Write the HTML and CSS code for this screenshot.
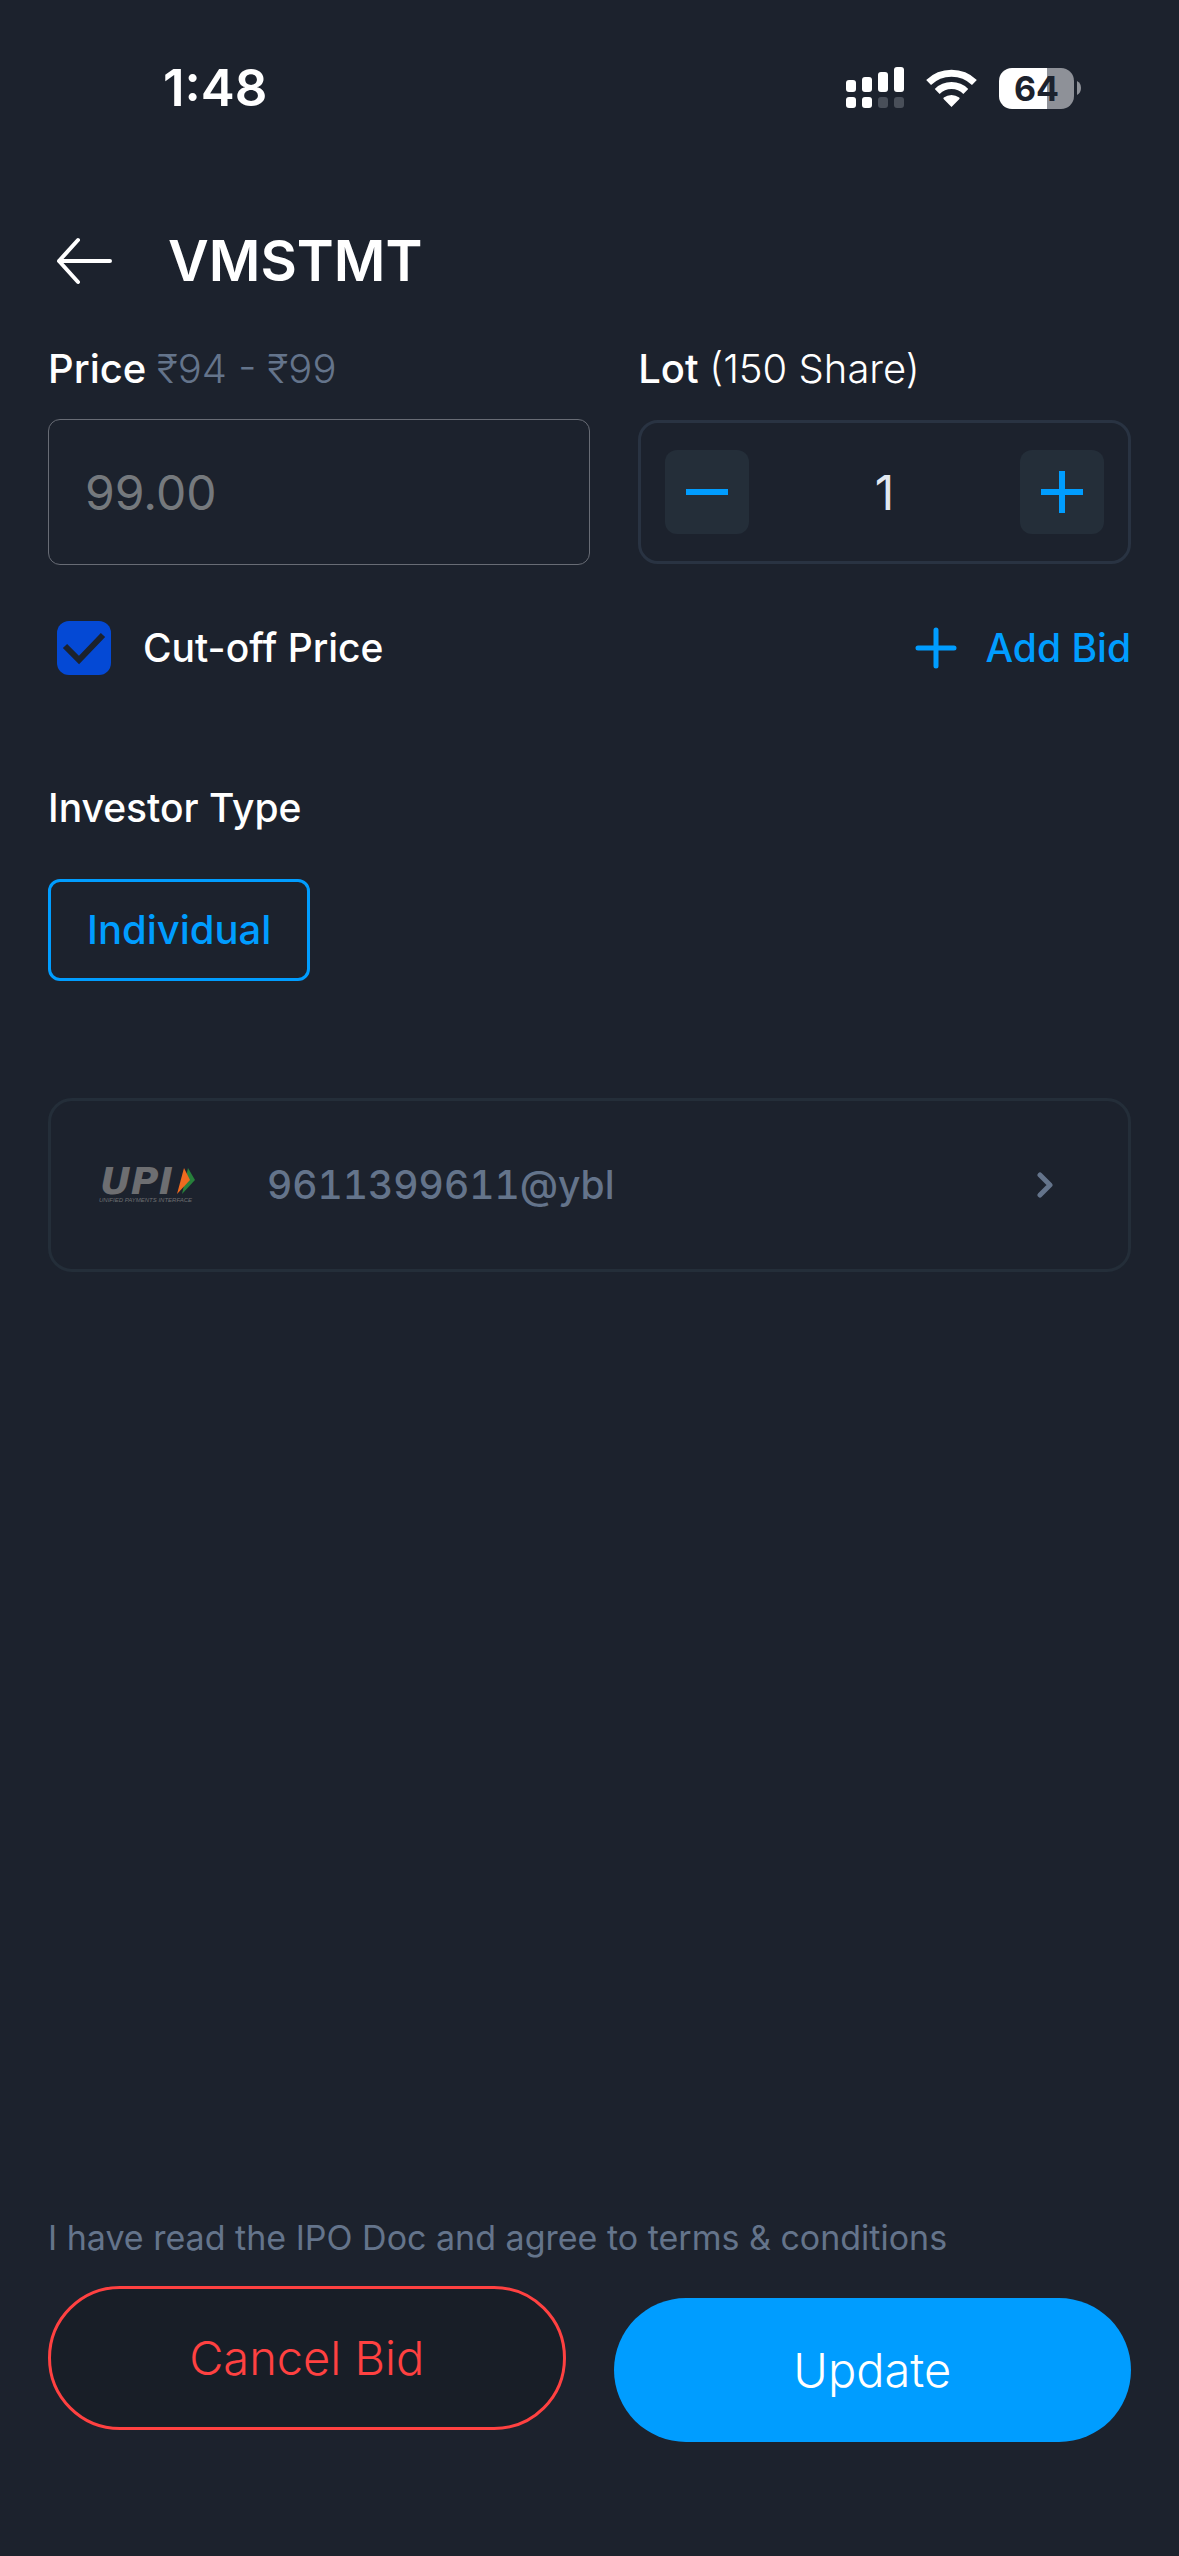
FILE: index.html
```html
<!DOCTYPE html>
<html lang="en">
<head>
<meta charset="utf-8">
<meta name="viewport" content="width=device-width, initial-scale=1">
<title>VMSTMT</title>
<link rel="stylesheet" href="styles.css">
</head>
<body>
<div class="status">
  <time class="status-time">1:48</time>
  <div class="status-icons">
    <svg class="signal" viewBox="0 0 58 42" aria-hidden="true">
      <g fill="#fff">
        <rect x="0" y="13" width="10" height="12" rx="3"/>
        <rect x="16" y="10" width="10" height="15" rx="3"/>
        <rect x="32" y="5" width="10" height="20" rx="3"/>
        <rect x="48" y="0" width="10" height="25" rx="3"/>
        <rect x="0" y="30" width="10" height="11" rx="3"/>
        <rect x="16" y="30" width="10" height="11" rx="3"/>
      </g>
      <g fill="#494f59">
        <rect x="32" y="30" width="10" height="11" rx="3"/>
        <rect x="48" y="30" width="10" height="11" rx="3"/>
      </g>
    </svg>
    <svg class="wifi" viewBox="0 0 51 38" aria-hidden="true">
      <g fill="none" stroke="#fff" stroke-width="7">
        <path d="M2.6 13.4a33 33 0 0 1 45.8 0"/>
        <path d="M11.2 22.4a20.5 20.5 0 0 1 28.6 0"/>
      </g>
      <path fill="#fff" d="M25.5 38 17.6 30q-.6-.8.2-1.4a12.5 12.5 0 0 1 15.4 0q.8.6.2 1.4z"/>
    </svg>
    <div class="battery">
      <span class="battery-body">64</span>
      <svg class="battery-tip" viewBox="0 0 5 14" aria-hidden="true"><path fill="#8e9198" d="M0 0q4 2 4 7t-4 7z"/></svg>
    </div>
  </div>
</div>

<header class="header">
  <button class="back" type="button" aria-label="Back">
    <svg viewBox="0 0 58 48" aria-hidden="true"><path d="M55 24H4M23 3 4 24l19 21"/></svg>
  </button>
  <h1 class="title">VMSTMT</h1>
</header>

<main class="content">
  <div class="bid">
    <label class="label" for="price">Price <span class="range">₹94 - ₹99</span></label>
    <label class="label" for="lot">Lot <span class="shares">(150 Share)</span></label>
    <input class="price" id="price" type="text" placeholder="99.00">
    <div class="stepper">
      <button class="step" type="button" aria-label="Decrease">
        <svg viewBox="0 0 42 42" aria-hidden="true"><path d="M0 21h42"/></svg>
      </button>
      <input class="lot" id="lot" type="text" value="1">
      <button class="step" type="button" aria-label="Increase">
        <svg viewBox="0 0 42 42" aria-hidden="true"><path d="M0 21h42M21 0v42"/></svg>
      </button>
    </div>
  </div>

  <div class="options">
    <label class="cutoff">
      <span class="tick">
        <input class="tick-box" type="checkbox" checked>
        <svg class="tick-mark" viewBox="0 0 54 54" aria-hidden="true"><path d="M8 25l14 14L46 14"/></svg>
      </span>
      Cut-off Price
    </label>
    <button class="add" type="button">
      <svg viewBox="0 0 42 42" aria-hidden="true"><path d="M3 21h36M21 3v36"/></svg>
      Add Bid
    </button>
  </div>

  <h2 class="subtitle">Investor Type</h2>
  <button class="chip" type="button">Individual</button>

  <button class="upi" type="button">
    <svg class="upi-logo" viewBox="0 0 96 36" aria-hidden="true">
      <path fill="#27803b" d="M89 1l7 12-13 14z"/>
      <path fill="#ee6a1f" d="M85 1l6 12-13 14z"/>
      <text class="upi-name" x="1" y="27">UPI</text>
      <text class="upi-tag" x="0" y="35">UNIFIED PAYMENTS INTERFACE</text>
    </svg>
    <span class="upi-id">9611399611@ybl</span>
    <svg class="chevron" viewBox="0 0 16 28" aria-hidden="true"><path d="M3 4l10 10L3 24"/></svg>
  </button>
</main>

<footer class="footer">
  <p class="terms">I have read the IPO Doc and agree to terms &amp; conditions</p>
  <div class="actions">
    <button class="action cancel" type="button">Cancel Bid</button>
    <button class="action update" type="button">Update</button>
  </div>
</footer>
</body>
</html>
```
FILE: styles.css
```css
* {
  box-sizing: border-box;
}

body {
  margin: 0;
  min-height: 100vh;
  display: flex;
  flex-direction: column;
  background: #1c222d;
  color: #fff;
  font-family: Inter, "Liberation Sans", sans-serif;
  font-size: 40px;
  line-height: 48px;
}

button,
input {
  margin: 0;
  padding: 0;
  border: 0;
  background: none;
  color: inherit;
  font: inherit;
}

svg {
  display: block;
}

/* Status bar */
.status {
  display: flex;
  align-items: center;
  justify-content: space-between;
  padding: 58px 97px 0 163px;
}

.status-time {
  font-size: 51px;
  font-weight: 600;
  line-height: 60px;
}

.status-icons {
  display: flex;
  align-items: center;
  gap: 22px;
}

.signal {
  width: 58px;
  height: 42px;
}

.wifi {
  width: 51px;
  height: 38px;
}

.battery {
  display: flex;
  align-items: center;
  gap: 3px;
}

.battery-body {
  width: 75px;
  border-radius: 13px;
  background: linear-gradient(90deg, #fff 64%, #8e9198 64%);
  color: #1c222d;
  font-size: 34px;
  font-weight: 700;
  line-height: 41px;
  text-align: center;
}

.battery-tip {
  width: 5px;
  height: 14px;
}

/* Header */
.header {
  display: flex;
  align-items: center;
  gap: 54px;
  padding: 107px 54px 48px;
}

.back svg {
  width: 60px;
  height: 48px;
  fill: none;
  stroke: #fff;
  stroke-width: 4px;
  stroke-linecap: round;
  stroke-linejoin: round;
}

.title {
  margin: 0;
  font-size: 56px;
  font-weight: 600;
  line-height: 72px;
}

/* Bid form */
.content {
  padding: 0 48px;
}

.bid {
  display: grid;
  grid-template-columns: minmax(0, 11fr) minmax(0, 10fr);
  column-gap: 48px;
  row-gap: 26px;
  align-items: center;
}

.label {
  font-weight: 500;
}

.range {
  color: #64748b;
  font-weight: 300;
}

.shares {
  font-weight: 300;
}

.price {
  width: 100%;
  height: 146px;
  padding: 0 36px;
  border: 1px solid #686c75;
  border-radius: 12px;
  font-size: 48px;
}

.price::placeholder {
  color: #75797d;
  opacity: 1;
}

.stepper {
  display: flex;
  align-items: center;
  height: 144px;
  padding: 0 24px;
  border: 3px solid #293342;
  border-radius: 20px;
}

.step {
  flex: none;
  display: grid;
  place-items: center;
  width: 84px;
  height: 84px;
  border-radius: 12px;
  background: #242e39;
}

.step svg,
.add svg {
  width: 42px;
  height: 42px;
  stroke: #009dff;
  stroke-width: 6px;
}

.lot {
  flex: 1;
  min-width: 0;
  color: #e2e8f0;
  font-size: 48px;
  text-align: center;
}

.options {
  display: flex;
  align-items: center;
  justify-content: space-between;
  margin-top: 56px;
  font-size: 39px;
  font-weight: 500;
}

.cutoff {
  display: flex;
  align-items: center;
  gap: 32px;
  padding-left: 9px;
}

.tick {
  position: relative;
}

.tick-box {
  display: block;
  appearance: none;
  width: 54px;
  height: 54px;
  border-radius: 12px;
  background: #0449d5;
}

.tick-mark {
  position: absolute;
  inset: 0;
  fill: none;
  stroke: #1c222d;
  stroke-width: 6px;
  pointer-events: none;
}

.add {
  display: flex;
  align-items: center;
  gap: 28px;
  color: #009dff;
}

.add svg {
  stroke-width: 5px;
  stroke-linecap: round;
}

.subtitle {
  margin: 109px 0 47px;
  font-size: 39px;
  font-weight: 500;
}

.chip {
  display: block;
  height: 102px;
  padding: 0 36px;
  border: 3px solid #009dff;
  border-radius: 12px;
  color: #009dff;
  font-weight: 500;
}

/* Payment handle */
.upi {
  display: flex;
  align-items: center;
  width: 100%;
  height: 174px;
  margin-top: 117px;
  padding: 0 75px 0 48px;
  border: 3px solid #242e39;
  border-radius: 24px;
  color: #64748b;
  font-size: 39px;
  font-weight: 500;
  text-align: left;
}

.upi-logo {
  width: 96px;
  height: 36px;
  overflow: visible;
}

.upi-name {
  fill: #6d6e71;
  font: italic bold 38px "DejaVu Sans", sans-serif;
}

.upi-tag {
  fill: #6d6e71;
  font: italic 6px "Liberation Sans", sans-serif;
}

.upi-id {
  flex: 1;
  padding-left: 72px;
  font-variant-numeric: tabular-nums;
}

.chevron {
  width: 16px;
  height: 28px;
  fill: none;
  stroke: #64748b;
  stroke-width: 5px;
  stroke-linecap: round;
  stroke-linejoin: round;
}

/* Footer */
.footer {
  margin-top: auto;
  padding: 0 48px 114px;
}

.terms {
  margin: 0 0 24px;
  color: #64748b;
  font-size: 34px;
}

.actions {
  display: grid;
  grid-template-columns: 1fr 1fr;
  column-gap: 48px;
  align-items: start;
}

.action {
  height: 144px;
  border-radius: 72px;
  font-size: 47px;
  font-weight: 300;
}

.cancel {
  border: 3px solid #ff4141;
  background: #181e27;
  color: #ff4141;
}

.update {
  margin-top: 12px;
  background: #009dff;
}
```
